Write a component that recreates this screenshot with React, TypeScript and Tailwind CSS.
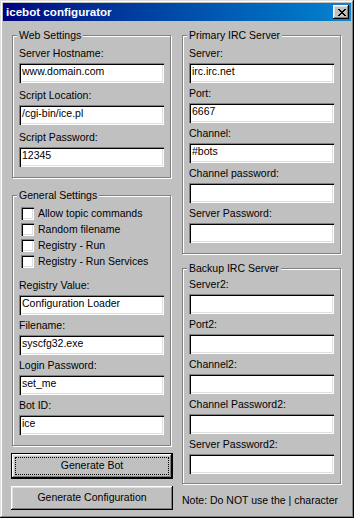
import React from "react";

const sunken =
  "shadow-[inset_1px_1px_0_#808080,inset_2px_2px_0_#000,inset_-1px_-1px_0_#fff,inset_-2px_-2px_0_#dfdfdf]";
const raised =
  "shadow-[inset_-1px_-1px_0_#000,inset_1px_1px_0_#fff,inset_-2px_-2px_0_#808080,inset_2px_2px_0_#dfdfdf]";

function Field({ label, value = "", className = "" }: { label: string; value?: string; className?: string }) {
  return (
    <div className={className}>
      <div className="h-[13px] leading-[13px] whitespace-nowrap">{label}</div>
      <div className={`mt-[3px] h-[20px] bg-white pt-[2px] pl-[3px] leading-[13px] whitespace-nowrap ${sunken}`}>{value}</div>
    </div>
  );
}

function Group({ title, className = "", children }: { title: string; className?: string; children: React.ReactNode }) {
  return (
    <div
      className={`relative w-[159px] border border-[#808080] px-[6px] shadow-[1px_1px_0_#fff,inset_1px_1px_0_#fff] ${className}`}
    >
      <div className="absolute top-[-7px] left-[4px] h-[13px] bg-[#c0c0c0] px-[2px] leading-[13px] whitespace-nowrap">
        {title}
      </div>
      {children}
    </div>
  );
}

function Check({ label }: { label: string }) {
  return (
    <div className="flex h-[16px] items-center gap-[4px] pl-[2px]">
      <div className={`h-[13px] w-[13px] bg-white ${sunken}`} />
      <span className="leading-[13px] whitespace-nowrap">{label}</span>
    </div>
  );
}

function CloseGlyph() {
  const px: [number, number][] = [
    [0, 0], [1, 0], [6, 0], [7, 0],
    [1, 1], [2, 1], [5, 1], [6, 1],
    [2, 2], [3, 2], [4, 2], [5, 2],
    [3, 3], [4, 3],
    [2, 4], [3, 4], [4, 4], [5, 4],
    [1, 5], [2, 5], [5, 5], [6, 5],
    [0, 6], [1, 6], [6, 6], [7, 6],
  ];
  return (
    <svg width="8" height="7" viewBox="0 0 8 7" shapeRendering="crispEdges">
      {px.map(([x, y]) => (
        <rect key={`${x}-${y}`} x={x} y={y} width="1" height="1" fill="#000" />
      ))}
    </svg>
  );
}

export default function App() {
  return (
    <div
      className="h-[518px] w-[354px] bg-[#c0c0c0] p-[3px] text-[10.5px] text-black font-['Liberation_Sans',Arial,sans-serif] shadow-[inset_-1px_-1px_0_#000,inset_1px_1px_0_#dfdfdf,inset_-2px_-2px_0_#808080,inset_2px_2px_0_#fff]"
    >
      {/* title bar */}
      <div className="flex h-[18px] items-center justify-between bg-linear-to-r from-[#000080] to-[#1084d0] pl-[3px] pr-[2px]">
        <span className="text-[11.6px] leading-[18px] font-bold text-white">icebot configurator</span>
        <div className={`flex h-[14px] w-[16px] items-center justify-center bg-[#c0c0c0] pl-px ${raised}`}>
          <CloseGlyph />
        </div>
      </div>

      <div className="flex gap-[9px] pt-[14px] pl-[9px]">
        {/* left column */}
        <div className="flex flex-col">
          <Group title="Web Settings" className="pt-[11px] pb-[10px]">
            <Field label="Server Hostname:" value="www.domain.com" />
            <Field label="Script Location:" value="/cgi-bin/ice.pl" className="mt-[6px]" />
            <Field label="Script Password:" value="12345" className="mt-[6px]" />
          </Group>

          <Group title="General Settings" className="mt-[17px] pt-[9px] pb-[10px]">
            <Check label="Allow topic commands" />
            <Check label="Random filename" />
            <Check label="Registry - Run" />
            <Check label="Registry - Run Services" />
            <Field label="Registry Value:" value="Configuration Loader" className="mt-[10px]" />
            <Field label="Filename:" value="syscfg32.exe" className="mt-[4px]" />
            <Field label="Login Password:" value="set_me" className="mt-[4px]" />
            <Field label="Bot ID:" value="ice" className="mt-[4px]" />
          </Group>

          <div className="-ml-px mt-[7px] h-[26px] w-[162px] border border-black">
            <div className={`relative flex h-full items-center justify-center ${raised}`}>
              <div className="absolute inset-[3px] border border-dotted border-black" />
              Generate Bot
            </div>
          </div>
          <div className={`-ml-px mt-[7px] flex h-[24px] w-[162px] items-center justify-center ${raised}`}>
            Generate Configuration
          </div>
        </div>

        {/* right column */}
        <div className="flex flex-col">
          <Group title="Primary IRC Server" className="pt-[11px] pb-[10px]">
            <Field label="Server:" value="irc.irc.net" />
            <Field label="Port:" value="6667" className="mt-[4px]" />
            <Field label="Channel:" value="#bots" className="mt-[4px]" />
            <Field label="Channel password:" className="mt-[4px]" />
            <Field label="Server Password:" className="mt-[4px]" />
          </Group>

          <Group title="Backup IRC Server" className="mt-[14px] pt-[9px] pb-[9px]">
            <Field label="Server2:" />
            <Field label="Port2:" className="mt-[4px]" />
            <Field label="Channel2:" className="mt-[4px]" />
            <Field label="Channel Password2:" className="mt-[4px]" />
            <Field label="Server Password2:" className="mt-[4px]" />
          </Group>

          <div className="mt-[10px] h-[13px] leading-[13px] whitespace-nowrap">Note: Do NOT use the | character</div>
        </div>
      </div>
    </div>
  );
}
